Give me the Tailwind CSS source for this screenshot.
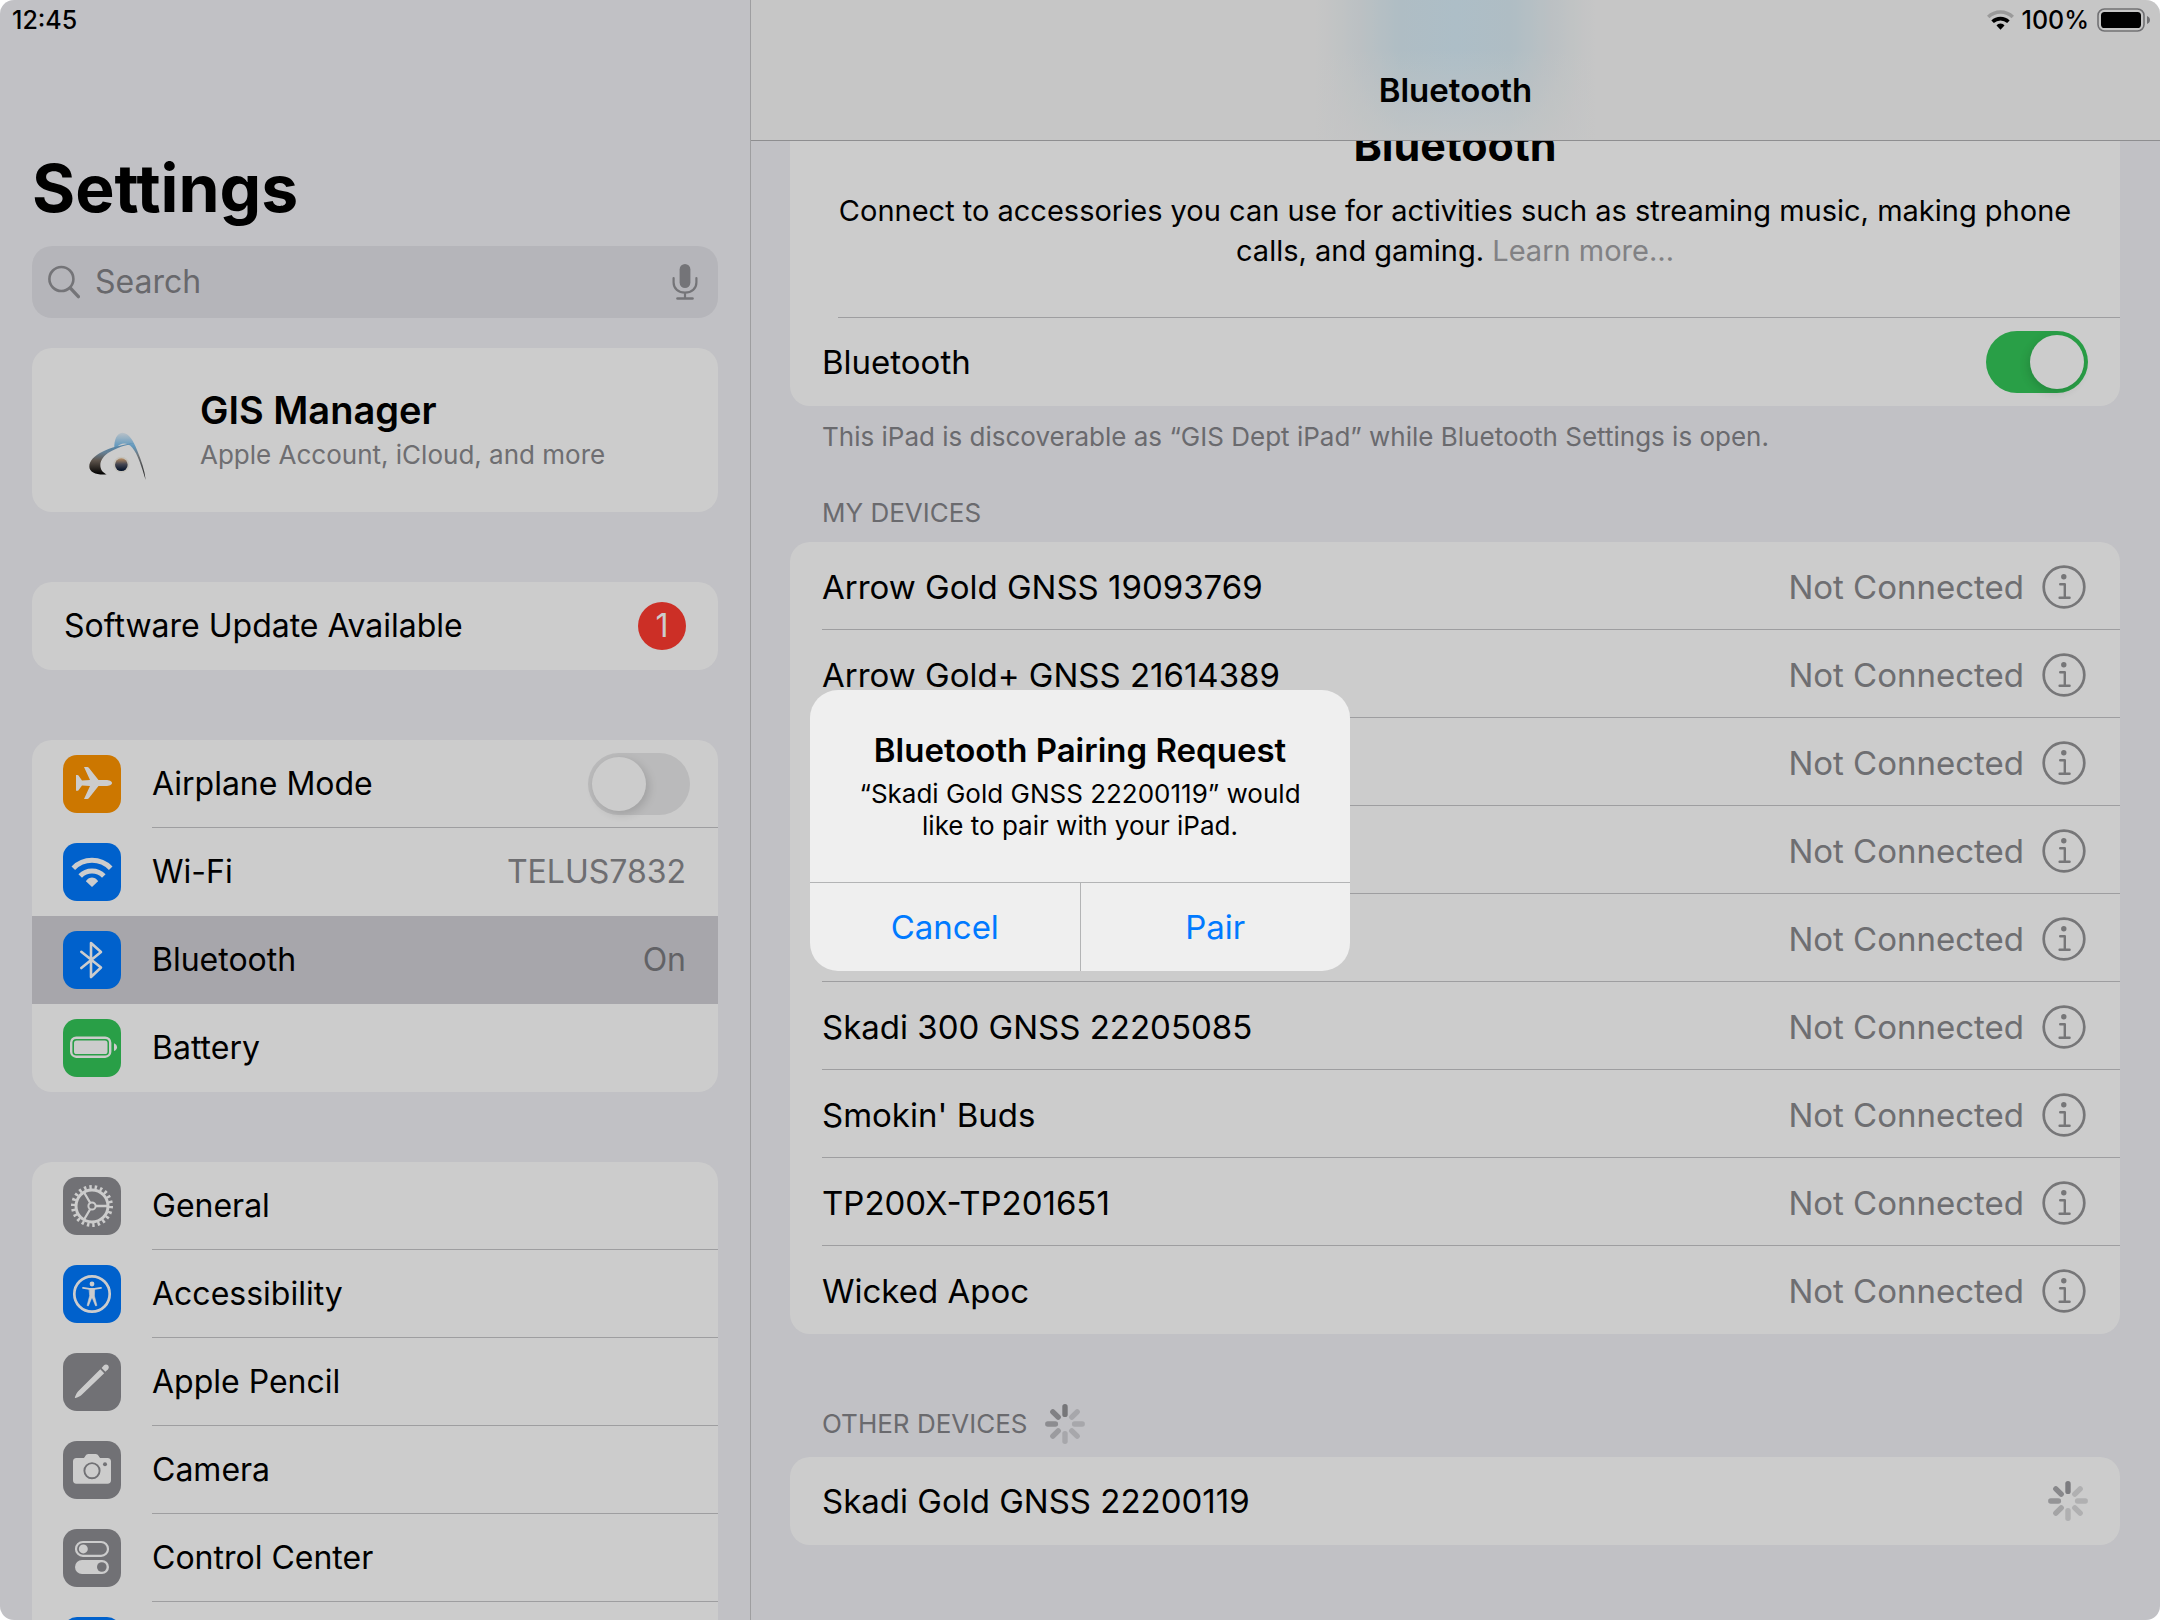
<!DOCTYPE html>
<html lang="en">
<head>
<meta charset="utf-8">
<meta name="viewport" content="width=device-width, initial-scale=1">
<title>Settings – Bluetooth</title>
<script src="https://cdn.jsdelivr.net/npm/@tailwindcss/browser@4"></script>
</head>
<body class="bg-white font-[Inter,sans-serif] text-[33px] leading-10 text-black">

<!-- Shared symbols -->
<svg class="hidden" aria-hidden="true">
  <symbol id="info" viewBox="0 0 44 44">
    <circle cx="22" cy="22" r="20.3" fill="none" stroke="currentColor" stroke-width="2.7"/>
    <circle cx="21.8" cy="11.8" r="2.7" fill="currentColor"/>
    <path d="M18.2 19.3h4.6v13.2M17.6 32.8h10" fill="none" stroke="currentColor" stroke-width="2.4" stroke-linecap="round" stroke-linejoin="round"/>
  </symbol>
  <symbol id="spinner" viewBox="0 0 40 40">
    <g stroke="currentColor" stroke-width="5.4" stroke-linecap="round">
      <path d="M20 2.8v7.6"/>
      <path d="M20 2.8v7.6" transform="rotate(315 20 20)" opacity=".85"/>
      <path d="M20 2.8v7.6" transform="rotate(270 20 20)" opacity=".7"/>
      <path d="M20 2.8v7.6" transform="rotate(225 20 20)" opacity=".5"/>
      <path d="M20 2.8v7.6" transform="rotate(180 20 20)" opacity=".34"/>
      <path d="M20 2.8v7.6" transform="rotate(135 20 20)" opacity=".34"/>
      <path d="M20 2.8v7.6" transform="rotate(90 20 20)" opacity=".34"/>
      <path d="M20 2.8v7.6" transform="rotate(45 20 20)" opacity=".34"/>
    </g>
  </symbol>
</svg>

<div class="relative flex h-screen overflow-hidden rounded-[14px] bg-[#f2f2f7]">

  <!-- Sidebar -->
  <aside class="flex w-[750px] shrink-0 flex-col px-8 text-[32px]">
    <div class="-ml-5 h-10 shrink-0 text-[25px] font-medium leading-10">12:45</div>
    <h1 class="mt-[108px] text-[66px] font-bold leading-[80px]">Settings</h1>

    <label class="mt-[18px] flex h-[72px] shrink-0 items-center rounded-[20px] bg-[#e3e3e9] pl-4 pr-5">
      <svg class="h-[34px] w-8 shrink-0 text-[#929296]" viewBox="0 0 32 34" fill="none" stroke="currentColor" stroke-linecap="round" aria-hidden="true">
        <circle cx="13.4" cy="14" r="12" stroke-width="2.6"/><path d="M22.4 23.2l8 8.4" stroke-width="3.4"/>
      </svg>
      <input type="search" placeholder="Search" aria-label="Search" class="ml-[15px] min-w-0 flex-1 bg-transparent outline-none placeholder:text-[#838388]">
      <svg class="h-9 w-[26px] shrink-0 text-[#929296]" viewBox="0 0 26 36" fill="none" stroke="currentColor" stroke-linecap="round" aria-hidden="true">
        <rect x="7.6" y="0" width="10.8" height="24" rx="5.4" fill="currentColor" stroke="none"/>
        <path d="M1.6 14v4.5c0 6.200 4.800 10.200 11.400 10.200s11.400-4 11.400-10.200V14M13 29v5" stroke-width="2.200"/><path d="M5.500 34.500h15" stroke-width="2.600"/>
      </svg>
    </label>

    <a href="#account" class="mt-[30px] flex h-[164px] shrink-0 items-center rounded-[20px] bg-white pl-8">
      <svg class="size-[120px] shrink-0" viewBox="12 -150 360 360" aria-hidden="true">
        <defs>
          <linearGradient id="sw" x1="0" y1="0" x2="0" y2="1"><stop offset="0" stop-color="#5fa9dd"/><stop offset=".3" stop-color="#7f9fb8"/><stop offset=".55" stop-color="#75695f"/><stop offset="1" stop-color="#000"/></linearGradient>
          <linearGradient id="tp" x1="0" y1="0" x2="0" y2="1"><stop offset="0" stop-color="#e8f2fa"/><stop offset=".28" stop-color="#7cc0ee"/><stop offset=".5" stop-color="#8b9094"/><stop offset="1" stop-color="#222"/></linearGradient>
          <linearGradient id="dt" x1="0" y1="0" x2="0" y2="1"><stop offset="0" stop-color="#e8b27c"/><stop offset=".45" stop-color="#5a5b68"/><stop offset="1" stop-color="#001230"/></linearGradient>
        </defs>
        <path d="M163 85C162 60 170 39 187 38c20 0 34 26 44 52 13 32 23 60 26 90-12-40-24-78-40-97-14-17-36-16-45-2z" fill="url(#tp)"/>
        <path d="M140 163c-28 3-52-6-52-23 0-34 60-62 135-70-58 12-101 34-102 65 0 15 8 23 19 28z" fill="url(#sw)"/>
        <circle cx="184" cy="134" r="24" fill="#f6f3ea"/>
        <circle cx="184" cy="134" r="19" fill="url(#dt)"/>
      </svg>
      <div class="ml-4">
        <div class="text-[38px] font-semibold leading-[46px]">GIS Manager</div>
        <div class="mt-1 text-[26px] leading-9 text-[#8a8a8e]">Apple Account, iCloud, and more</div>
      </div>
    </a>

    <a href="#update" class="mt-[70px] flex h-[88px] shrink-0 items-center justify-between rounded-[20px] bg-white px-8">
      Software Update Available
      <span class="flex size-12 items-center justify-center rounded-full bg-[#ff3b30] text-white">1</span>
    </a>

    <ul class="mt-[70px] shrink-0 overflow-hidden rounded-[20px] bg-white">
      <li>
        <label class="flex h-[88px] items-center gap-[31px] pl-[31px]">
          <svg class="size-[58px] shrink-0 rounded-[14px] bg-[#ff9500]" viewBox="0 0 58 58" fill="#fff" aria-hidden="true"><path d="M49 28c0 2-3 3-6 3h-7.500L26 43c-.5.600-1 1-1.700 1H21l6-13-8-.6-3.500 4.800c-.3.400-.6.600-1 .6H13V20h1.500c.4 0 .7.200 1 .6l3.500 5 8-.6-6-13h3.300c.7 0 1.200.4 1.700 1l9.500 12H43c3 0 6 1 6 3z"/></svg>
          <span class="flex h-full flex-1 items-center justify-between border-b border-[#c6c6c8] pr-7">Airplane Mode
            <input type="checkbox" role="switch" class="h-[62px] w-[102px] shrink-0 appearance-none rounded-full bg-[#e9e9ea] p-1 before:block before:size-[54px] before:rounded-full before:bg-white before:shadow-[3px_3px_10px_rgb(0_0_0/0.14)] before:content-[''] checked:bg-[#34c759] checked:before:translate-x-10">
          </span>
        </label>
      </li>
      <li>
        <a href="#wifi" class="flex h-[88px] items-center gap-[31px] pl-[31px]">
          <svg class="size-[58px] shrink-0 rounded-[14px] bg-[#007aff]" viewBox="0 0 58 58" fill="none" stroke="#fff" aria-hidden="true"><path d="M10.300 25.200a26 26 0 0 1 37.400 0M17.200 33a16.500 16.500 0 0 1 23.600 0" stroke-width="5"/><path d="M29 44l-5.800-5.600c-.6-.6 2.300-3.900 5.800-3.900s6.400 3.300 5.800 3.900z" fill="#fff" stroke="none"/></svg>
          <span class="flex flex-1 items-center justify-between pr-8">Wi-Fi<span class="text-[#8a8a8e]">TELUS7832</span></span>
        </a>
      </li>
      <li>
        <a href="#bluetooth" aria-current="page" class="flex h-[88px] items-center gap-[31px] bg-[#d1d0d6] pl-[31px]">
          <svg class="size-[58px] shrink-0 rounded-[14px] bg-[#007aff]" viewBox="0 0 58 58" fill="none" stroke="#fff" stroke-width="2.600" stroke-linecap="round" stroke-linejoin="round" aria-hidden="true"><path d="M18.300 20.800l19.700 15.700-10 9.500V12l10 9-19.700 16"/></svg>
          <span class="flex flex-1 items-center justify-between pr-8">Bluetooth<span class="text-[#7b7b80]">On</span></span>
        </a>
      </li>
      <li>
        <a href="#battery" class="flex h-[88px] items-center gap-[31px] pl-[31px]">
          <svg class="size-[58px] shrink-0 rounded-[14px] bg-[#34c759]" viewBox="0 0 58 58" fill="#fff" aria-hidden="true"><rect x="8.200" y="18.700" width="39" height="19" rx="5" fill="none" stroke="#fff" stroke-width="2.400"/><rect x="11" y="21.500" width="33.500" height="13.500" rx="2.600"/><path d="M51 24.300c1.800.8 3 2.200 3 3.900s-1.200 3.100-3 3.900z"/></svg>
          <span>Battery</span>
        </a>
      </li>
    </ul>

    <ul class="mt-[70px] shrink-0 overflow-hidden rounded-[20px] bg-white">
      <li>
        <a href="#general" class="flex h-[88px] items-center gap-[31px] pl-[31px]">
          <svg class="size-[58px] shrink-0 rounded-[14px] bg-[#8e8e93]" viewBox="0 0 58 58" fill="none" stroke="#fff" aria-hidden="true"><circle cx="29" cy="29" r="16" stroke-width="3"/><circle cx="29" cy="29" r="19" stroke-width="4" pathLength="44" stroke-dasharray="0.900 1.100"/><circle cx="29" cy="29" r="3.600" stroke-width="2"/><path d="M33 29h12M27 25.500l-6.500-11M27 32.500l-6.500 11" stroke-width="2.300"/></svg>
          <span class="flex h-full flex-1 items-center border-b border-[#c6c6c8]">General</span>
        </a>
      </li>
      <li>
        <a href="#accessibility" class="flex h-[88px] items-center gap-[31px] pl-[31px]">
          <svg class="size-[58px] shrink-0 rounded-[14px] bg-[#007aff]" viewBox="0 0 58 58" fill="none" stroke="#fff" stroke-linecap="round" aria-hidden="true"><circle cx="29" cy="29" r="17.700" stroke-width="2.700"/><circle cx="29" cy="19" r="2.400" fill="#fff" stroke="none"/><path d="M20 22.800l6.500 1h5l6.500-1" stroke-width="1.800"/><path d="M26.300 23.500h5.400l-.3 7.500 2.500 9.500-1.300.4L29.300 33h-.6l-3.300 7.900-1.300-.4 2.500-9.500z" fill="#fff" stroke-width=".6" stroke-linejoin="round"/></svg>
          <span class="flex h-full flex-1 items-center border-b border-[#c6c6c8]">Accessibility</span>
        </a>
      </li>
      <li>
        <a href="#pencil" class="flex h-[88px] items-center gap-[31px] pl-[31px]">
          <svg class="size-[58px] shrink-0 rounded-[14px] bg-[#8e8e93]" viewBox="0 0 58 58" fill="#fff" aria-hidden="true"><path d="M37.300 16.300l3.900 3.900-22.700 21.700c-1.500 1.200-4 2.400-6 3-.5 0-.8-.2-.6-.7.700-2 1.900-4.500 3.300-6z"/><path d="M38.600 15l2.400-2.700c1.300-1.300 3-1 4 0 1 1.100 1.200 2.700 0 4l-2.600 2.500z"/></svg>
          <span class="flex h-full flex-1 items-center border-b border-[#c6c6c8]">Apple Pencil</span>
        </a>
      </li>
      <li>
        <a href="#camera" class="flex h-[88px] items-center gap-[31px] pl-[31px]">
          <svg class="size-[58px] shrink-0 rounded-[14px] bg-[#8e8e93]" viewBox="0 0 58 58" fill="#fff" aria-hidden="true"><path d="M13.500 17H20c1.200 0 1.500-.6 2.300-2 .8-1.300 1.600-2 3-2h7.400c1.400 0 2.200.7 3 2 .8 1.400 1.100 2 2.300 2h6.500c2.300 0 3.500 1.200 3.500 3.500v18.700c0 2.300-1.200 3.500-3.500 3.500h-31c-2.300 0-3.500-1.200-3.500-3.500V20.500c0-2.300 1.200-3.500 3.500-3.500z"/><circle cx="29" cy="29.700" r="7.600" fill="none" stroke="#8e8e93" stroke-width="1.900"/><circle cx="42" cy="23.200" r="2" fill="#8e8e93"/></svg>
          <span class="flex h-full flex-1 items-center border-b border-[#c6c6c8]">Camera</span>
        </a>
      </li>
      <li>
        <a href="#control-center" class="flex h-[88px] items-center gap-[31px] pl-[31px]">
          <svg class="size-[58px] shrink-0 rounded-[14px] bg-[#8e8e93]" viewBox="0 0 58 58" fill="#fff" aria-hidden="true"><rect x="13" y="13" width="32" height="13.800" rx="6.900" fill="none" stroke="#fff" stroke-width="2.200"/><circle cx="20.300" cy="19.900" r="4.500"/><rect x="12" y="31" width="34" height="14" rx="7"/><circle cx="38.800" cy="38" r="4.800" fill="#8e8e93"/></svg>
          <span class="flex h-full flex-1 items-center border-b border-[#c6c6c8]">Control Center</span>
        </a>
      </li>
      <li>
        <a href="#display" aria-label="Display" class="flex h-[88px] items-center gap-[31px] pl-[31px]">
          <span class="size-[58px] shrink-0 rounded-[14px] bg-[#007aff]"></span>
        </a>
      </li>
    </ul>
  </aside>

  <!-- Detail pane -->
  <main class="flex min-w-0 flex-1 flex-col border-l border-[#c6c6c8]">
    <header class="h-[141px] shrink-0 border-b border-[#b2b2b5] bg-[#f8f8f8] bg-[linear-gradient(to_bottom,rgb(248_248_248/0)_35%,rgb(248_248_248/0.75)_100%),linear-gradient(to_right,transparent_calc(50%_-_140px),#eaf1f4_calc(50%_-_95px),#dbedf6_calc(50%_-_55px),#d9eef9_50%,#dbedf6_calc(50%_+_55px),#eaf1f4_calc(50%_+_95px),transparent_calc(50%_+_140px))]">
      <div class="flex h-10 items-center justify-end pr-[9px] text-[25px] font-medium">
        <svg class="h-5 w-[27px]" viewBox="0 0 27 20" fill="none" stroke="#000" aria-hidden="true"><path d="M1.200 7a17.500 17.500 0 0 1 24.600 0" stroke-width="3.600" opacity=".22"/><path d="M5.600 11.800a11.300 11.300 0 0 1 15.800 0" stroke-width="3.600"/><path d="M13.500 19.800l-4-4.200c.9-1.400 2.300-2.200 4-2.200s3.100.8 4 2.200z" fill="#000" stroke="none"/></svg>
        <span class="ml-2">100%</span>
        <svg class="ml-2 h-6 w-[54px]" viewBox="0 0 54 24" aria-hidden="true"><rect x="1" y="1" width="46" height="22" rx="6.500" fill="none" stroke="#8e8e91" stroke-width="1.600"/><rect x="4" y="4" width="40" height="16" rx="3.600"/><path d="M50 8c1.800.7 3 2.200 3 4s-1.200 3.300-3 4z" fill="#8e8e91"/></svg>
      </div>
      <h2 class="text-center font-semibold leading-[100px]">Bluetooth</h2>
    </header>

    <div class="flex-1 overflow-hidden pl-[39px] pr-10">
      <section class="-mt-[22px] rounded-b-[20px] bg-white">
        <div class="ml-12">
          <div class="border-b border-[#c6c6c8] pb-[46px] pr-12 text-center">
            <h3 class="text-[43px] font-bold leading-[52px]">Bluetooth</h3>
            <p class="mt-5 text-[29px]">Connect to accessories you can use for activities such as streaming music, making phone calls, and gaming. <a href="#learn" class="text-[#a2a2a5]">Learn more…</a></p>
          </div>
        </div>
        <label class="flex h-[88px] items-center justify-between px-8">Bluetooth
          <input type="checkbox" role="switch" checked class="h-[62px] w-[102px] shrink-0 appearance-none rounded-full bg-[#e9e9ea] p-1 before:block before:size-[54px] before:rounded-full before:bg-white before:shadow-[-2px_3px_10px_rgb(0_0_0/0.14)] before:content-[''] checked:bg-[#34c759] checked:before:translate-x-10">
        </label>
      </section>
      <p class="mt-[13px] pl-8 text-[26px] leading-9 text-[#85858a]">This iPad is discoverable as “GIS Dept iPad” while Bluetooth Settings is open.</p>

      <h3 class="mt-10 pl-8 text-[26px] leading-9 text-[#85858a]">MY DEVICES</h3>
      <ul class="mt-[11px] rounded-[20px] bg-white pl-8">
        <li class="flex h-[88px] items-center border-b border-[#c6c6c8] pr-[34px] pt-0.5">Arrow Gold GNSS 19093769<span class="ml-auto text-[#8a8a8e]">Not Connected</span><button type="button" aria-label="Details" class="ml-[18px] text-[#949496]"><svg class="size-11"><use href="#info"/></svg></button></li>
        <li class="flex h-[88px] items-center border-b border-[#c6c6c8] pr-[34px] pt-0.5">Arrow Gold+ GNSS 21614389<span class="ml-auto text-[#8a8a8e]">Not Connected</span><button type="button" aria-label="Details" class="ml-[18px] text-[#949496]"><svg class="size-11"><use href="#info"/></svg></button></li>
        <li class="flex h-[88px] items-center border-b border-[#c6c6c8] pr-[34px] pt-0.5"><span class="ml-auto text-[#8a8a8e]">Not Connected</span><button type="button" aria-label="Details" class="ml-[18px] text-[#949496]"><svg class="size-11"><use href="#info"/></svg></button></li>
        <li class="flex h-[88px] items-center border-b border-[#c6c6c8] pr-[34px] pt-0.5"><span class="ml-auto text-[#8a8a8e]">Not Connected</span><button type="button" aria-label="Details" class="ml-[18px] text-[#949496]"><svg class="size-11"><use href="#info"/></svg></button></li>
        <li class="flex h-[88px] items-center border-b border-[#c6c6c8] pr-[34px] pt-0.5"><span class="ml-auto text-[#8a8a8e]">Not Connected</span><button type="button" aria-label="Details" class="ml-[18px] text-[#949496]"><svg class="size-11"><use href="#info"/></svg></button></li>
        <li class="flex h-[88px] items-center border-b border-[#c6c6c8] pr-[34px] pt-0.5">Skadi 300 GNSS 22205085<span class="ml-auto text-[#8a8a8e]">Not Connected</span><button type="button" aria-label="Details" class="ml-[18px] text-[#949496]"><svg class="size-11"><use href="#info"/></svg></button></li>
        <li class="flex h-[88px] items-center border-b border-[#c6c6c8] pr-[34px] pt-0.5">Smokin' Buds<span class="ml-auto text-[#8a8a8e]">Not Connected</span><button type="button" aria-label="Details" class="ml-[18px] text-[#949496]"><svg class="size-11"><use href="#info"/></svg></button></li>
        <li class="flex h-[88px] items-center border-b border-[#c6c6c8] pr-[34px] pt-0.5">TP200X-TP201651<span class="ml-auto text-[#8a8a8e]">Not Connected</span><button type="button" aria-label="Details" class="ml-[18px] text-[#949496]"><svg class="size-11"><use href="#info"/></svg></button></li>
        <li class="flex h-[88px] items-center pr-[34px] pt-0.5">Wicked Apoc<span class="ml-auto text-[#8a8a8e]">Not Connected</span><button type="button" aria-label="Details" class="ml-[18px] text-[#949496]"><svg class="size-11"><use href="#info"/></svg></button></li>
      </ul>

      <div class="mt-[70px] flex h-10 items-center gap-[17px] pl-8">
        <h3 class="text-[26px] leading-9 text-[#85858a]">OTHER DEVICES</h3>
        <svg class="size-10 text-[#949498]" role="img" aria-label="Searching"><use href="#spinner"/></svg>
      </div>
      <ul class="mt-[13px] rounded-[20px] bg-white">
        <li class="flex h-[88px] items-center justify-between px-8">Skadi Gold GNSS 22200119<svg class="size-10 text-[#9c9ca0]" role="img" aria-label="Pairing"><use href="#spinner"/></svg></li>
      </ul>
    </div>
  </main>

  <!-- Pairing alert over the dimmed screen -->
  <div class="absolute inset-0 flex items-center justify-center bg-black/20 pt-[41px]">
    <dialog open aria-labelledby="alert-title" class="static m-0 w-[540px] overflow-hidden rounded-[28px] bg-[#efefef] text-center">
      <div class="px-8 pb-10 pt-[38px]">
        <h2 id="alert-title" class="font-semibold leading-[44px]">Bluetooth Pairing Request</h2>
        <p class="mt-1.5 text-[26px] leading-8">“Skadi Gold GNSS 22200119” would like to pair with your iPad.</p>
      </div>
      <div class="flex divide-x divide-[#b3b4b5] border-t border-[#b3b4b5] text-[#007aff]">
        <button type="button" class="h-[88px] flex-1 outline-none">Cancel</button>
        <button type="button" class="h-[88px] flex-1 outline-none">Pair</button>
      </div>
    </dialog>
  </div>
</div>
</body>
</html>
